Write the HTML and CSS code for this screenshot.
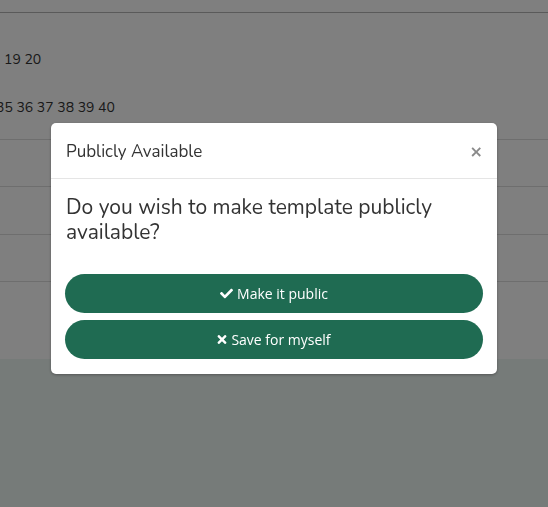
FILE: index.html
```html
<!DOCTYPE html>
<html>
<head>
<meta charset="utf-8">
<link rel="stylesheet" href="styles.css">
</head>
<body>
<div class="page">
  <div class="topbar"></div>
  <div class="table">
    <div class="row r1"><span class="nums">19 20</span></div>
    <div class="row r2"><span class="nums shift">35 36 37 38 39 40</span></div>
    <div class="row r3"></div>
    <div class="row r4"></div>
    <div class="row r5"></div>
    <div class="row r6"></div>
  </div>
  <div class="footer-area"></div>
</div>
<div class="overlay"></div>
<div class="modal">
  <div class="modal-header">
    <span class="modal-title">Publicly Available</span>
    <span class="close">&times;</span>
  </div>
  <div class="modal-body">
    <p class="question">Do you wish to make template publicly available?</p>
    <div class="actions">
      <button class="btn"><svg class="ico" viewBox="0 0 512 512"><path d="M173.9 439.4 7.5 273c-10-10-10-26.2 0-36.2l36.2-36.2c10-10 26.2-10 36.2 0L192 312.7 432.1 72.6c10-10 26.2-10 36.2 0l36.2 36.2c10 10 10 26.2 0 36.2L210.1 439.4c-10 10-26.2 10-36.2 0z" fill="#fff"/></svg>Make it public</button>
      <button class="btn"><svg class="ico ico-x" viewBox="0 0 352 512"><path d="m242.7 256 100-100c12.3-12.3 12.3-32.2 0-44.4l-22.2-22.2c-12.3-12.3-32.2-12.3-44.4 0L176 189.3 76 89.3c-12.3-12.3-32.2-12.3-44.4 0L9.2 111.5c-12.3 12.3-12.3 32.2 0 44.4l100 100-100 100c-12.3 12.3-12.3 32.2 0 44.4l22.2 22.2c12.3 12.3 32.2 12.3 44.4 0l100-100 100 100c12.3 12.3 32.2 12.3 44.4 0l22.2-22.2c12.3-12.3 12.3-32.2 0-44.4L242.7 256z" fill="#fff"/></svg>Save for myself</button>
    </div>
  </div>
</div>
</body>
</html>
```

FILE: styles.css
```css
html, body {
  margin: 0;
  padding: 0;
}
body {
  width: 548px;
  height: 507px;
  overflow: hidden;
  font-family: "Nunito", "Lato", "Noto Sans", sans-serif;
  background: #edf6f3;
}
.page {
  display: flex;
  flex-direction: column;
  height: 507px;
}
.topbar {
  height: 12px;
  border-bottom: 1px solid #b4b4b4;
  background: #fff;
}
.table {
  background: #fff;
  display: flex;
  flex-direction: column;
}
.row {
  border-bottom: 1px solid #dcdcdc;
  display: flex;
  align-items: flex-start;
  font-size: 14px;
  line-height: 20px;
  color: #333;
  box-sizing: border-box;
}
.r1 { height: 70px; padding-top: 37px; padding-left: 4px; border-bottom: none; }
.r2 { height: 57px; padding-top: 15px; }
.shift { margin-left: -4px; }
.r3 { height: 47px; }
.r4 { height: 48px; }
.r5 { height: 47px; }
.r6 { height: 77px; border-bottom: none; }
.footer-area { flex: 1; }
.overlay {
  position: fixed;
  inset: 0;
  background: rgba(0, 0, 0, 0.5);
}
.modal {
  position: fixed;
  top: 123px;
  left: 51px;
  width: 446px;
  background: #fff;
  border-radius: 5px;
  box-shadow: 0 1px 3px rgba(0,0,0,0.3);
}
.modal-header {
  display: flex;
  align-items: center;
  justify-content: space-between;
  height: 56px;
  box-sizing: border-box;
  padding: 1px 15px 0;
  border-bottom: 1px solid #e5e5e5;
}
.modal-title {
  font-size: 17px;
  color: #333;
}
.close {
  font-family: "DejaVu Sans", sans-serif;
  font-weight: bold;
  font-size: 16px;
  color: #8a8a8a;
  margin-right: -1px;
}
.modal-body {
  padding: 16px 14px 15px 14px;
}
.question {
  margin: 0 1px 29px;
  font-size: 21px;
  line-height: 25px;
  color: #333;
}
.actions {
  display: flex;
  flex-direction: column;
  gap: 7px;
}
.btn {
  height: 39px;
  border: none;
  border-radius: 20px;
  background: #1f6b52;
  color: #fff;
  font-family: "Open Sans", sans-serif;
  font-size: 14px;
  display: flex;
  align-items: center;
  justify-content: center;
  gap: 4px;
  padding: 0;
}
.ico {
  width: 13px;
  height: 13px;
}
.ico-x {
  width: 10px;
}
```
